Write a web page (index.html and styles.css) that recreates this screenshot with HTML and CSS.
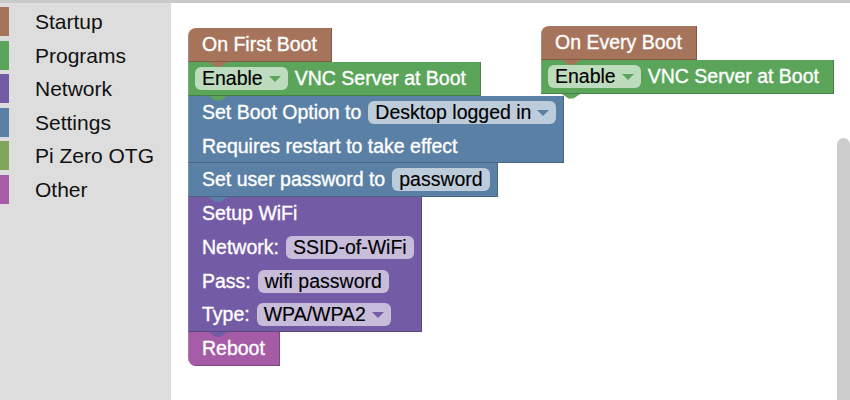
FILE: index.html
```html
<!doctype html>
<html lang="en">
<head>
	<meta charset="UTF-8">
	<title>PiBakery</title>
	<link rel="stylesheet" href="styles.css">
</head>
<body>
	<div class="app">
		<div class="toolbox">
			<div class="cat startup">Startup</div>
			<div class="cat programs">Programs</div>
			<div class="cat network">Network</div>
			<div class="cat settings">Settings</div>
			<div class="cat otg">Pi Zero OTG</div>
			<div class="cat other">Other</div>
		</div>
		<div class="workspace">
			<div class="stack stack-first">
				<div class="block hat startup">
					<div class="row"><span class="lbl">On First Boot</span></div>
				</div>
				<div class="block programs">
					<div class="row"><span class="field">Enable<i class="arrow"></i></span><span class="lbl">VNC Server at Boot</span></div>
				</div>
				<div class="block settings">
					<div class="row"><span class="lbl">Set Boot Option to</span><span class="field">Desktop logged in<i class="arrow"></i></span></div>
					<div class="row"><span class="lbl">Requires restart to take effect</span></div>
				</div>
				<div class="block settings">
					<div class="row"><span class="lbl">Set user password to</span><span class="field">password</span></div>
				</div>
				<div class="block network">
					<div class="row"><span class="lbl">Setup WiFi</span></div>
					<div class="row"><span class="lbl">Network:</span><span class="field">SSID-of-WiFi</span></div>
					<div class="row"><span class="lbl">Pass:</span><span class="field">wifi password</span></div>
					<div class="row"><span class="lbl">Type:</span><span class="field">WPA/WPA2<i class="arrow"></i></span></div>
				</div>
				<div class="block other end">
					<div class="row"><span class="lbl">Reboot</span></div>
				</div>
			</div>

			<div class="stack stack-every">
				<div class="block hat startup">
					<div class="row"><span class="lbl">On Every Boot</span></div>
				</div>
				<div class="block programs">
					<div class="row"><span class="field">Enable<i class="arrow"></i></span><span class="lbl">VNC Server at Boot</span></div>
				</div>
			</div>

			<div class="scrollbar"></div>
		</div>
	</div>
</body>
</html>
```

FILE: styles.css
```css
body,html{
	width: 100%;
	height: 100%;
}
body{
	margin: 0;
	font-family: "Liberation Sans", Arial, sans-serif;
}
.app{
	display: flex;
	height: 400px;
	border-top: 3px solid #c9c9c9;
	box-sizing: border-box;
	overflow: hidden;
}

/* toolbox */
.toolbox{
	width: 171px;
	flex-shrink: 0;
	background: #dddddd;
	padding-top: 4px;
	box-sizing: border-box;
}
.cat{
	height: 29px;
	line-height: 29px;
	margin-bottom: 4.6px;
	border-left: 9px solid var(--c);
	padding-left: 26px;
	font-size: 21px;
	color: #111;
}
.startup{ --c: #a5745b; }
.programs{ --c: #5ba55b; }
.network{ --c: #745ba5; }
.settings{ --c: #5b80a5; }
.otg{ --c: #80a55b; }
.other{ --c: #a55ba5; }

/* workspace */
.workspace{
	flex: 1;
	position: relative;
	background: #fff;
}
.stack{
	position: absolute;
	display: flex;
	flex-direction: column;
	align-items: flex-start;
}
.stack-first{
	left: 17px;
	top: 25px;
}
.stack-every{
	left: 370px;
	top: 23px;
}
.block{
	position: relative;
	background: var(--c);
	color: #fff;
	font-size: 19.5px;
	-webkit-text-stroke: 0.35px currentColor;
	padding: 0 8px 0 14px;
	box-shadow: inset -1px -1px 0 rgba(0,0,0,.22), inset 1px 0 0 rgba(255,255,255,.15);
}
.block:after{
	content: "";
	position: absolute;
	left: 20px;
	bottom: -5px;
	width: 20px;
	height: 5px;
	background: var(--c);
	clip-path: polygon(0 0, 100% 0, 62% 100%, 38% 100%);
	z-index: 1;
}
.block.end:after{
	display: none;
}
.block.hat{
	border-top-left-radius: 8px;
}
.block.other{
	border-bottom-left-radius: 8px;
}
.row{
	display: flex;
	align-items: center;
	gap: 14px;
	height: 33.75px;
	white-space: nowrap;
}
.lbl:last-child{
	margin-right: 7px;
}
.field{
	display: flex;
	align-items: center;
	gap: 6px;
	height: 23px;
	padding: 0 7px;
	margin: 0 -7px;
	border-radius: 6px;
	background: rgba(255,255,255,.6);
	color: #000;
	-webkit-text-stroke: 0.15px currentColor;
}
.field:last-child{
	margin-right: 0;
}
.arrow{
	width: 0;
	height: 0;
	border-left: 6px solid transparent;
	border-right: 6px solid transparent;
	border-top: 6px solid var(--c);
	margin-top: 1px;
}

.scrollbar{
	position: absolute;
	right: 0;
	top: 135px;
	width: 13px;
	height: 300px;
	border-radius: 7px;
	background: #cccccc;
}
```
